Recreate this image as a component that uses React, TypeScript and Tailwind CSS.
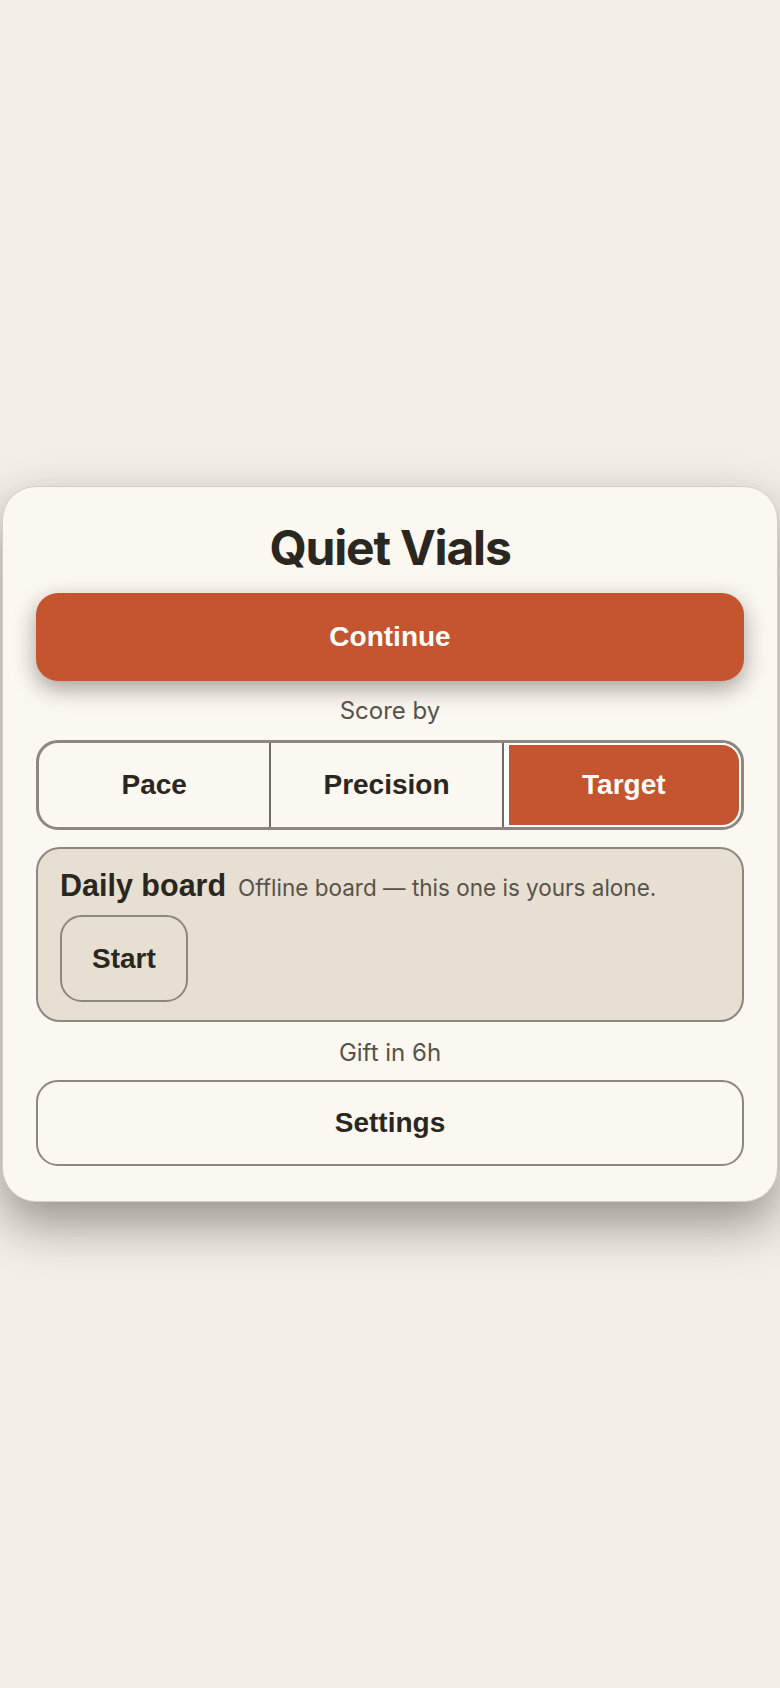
import React from "react";

const sans = "font-['Liberation_Sans',Arial,sans-serif]";
const inter = "font-['Inter','Noto_Sans',sans-serif]";

const modes = ["Pace", "Precision", "Target"];

const App = () => {
  const selected = "Target";
  return (
    <div className="min-h-screen bg-[#f3eee7] flex items-center justify-center px-[2px]">
      <div className="w-full bg-[#fbf7f1] border border-[#d3cec6] rounded-[34px] px-[33px] pt-[32px] pb-[35px] shadow-[0_22px_50px_rgba(40,34,28,0.45)] flex flex-col">
        <h1 className={`${inter} text-[48px] leading-[1.2] font-bold text-center text-[#2a2620] tracking-[-1.2px]`}>
          Quiet Vials
        </h1>
        <button
          className={`${sans} mt-[17px] h-[88px] w-full rounded-[22px] bg-[#c4552e] text-white text-[28px] font-bold shadow-[0_8px_22px_rgba(40,30,20,0.4)]`}
        >
          Continue
        </button>
        <p className={`${inter} mt-[12px] text-center text-[24px] leading-[36px] text-[#57524b]`}>Score by</p>
        <div className="mt-[11px] flex h-[90px] border-[3px] border-[#8c877f] rounded-[22px] overflow-hidden">
          {modes.map((mode, i) =>
            mode === selected ? (
              <button
                key={mode}
                className={`${sans} flex-1 bg-[#c4552e] text-white text-[28px] font-bold border-white border-t-2 border-r-2 border-b-2 border-l-[5px] rounded-r-[19px]`}
              >
                {mode}
              </button>
            ) : (
              <button
                key={mode}
                className={`${sans} flex-1 text-[#2a2620] text-[28px] font-bold ${i < modes.length - 1 ? "border-r-2 border-[#6f6a63]" : ""}`}
              >
                {mode}
              </button>
            )
          )}
        </div>
        <div className="mt-[17px] bg-[#e7dfd1] border-2 border-[#8c877f] rounded-[24px] px-[22px] pt-[19px] pb-[18px] flex flex-col items-start gap-[10px]">
          <div className="flex items-baseline gap-[12px]">
            <h2 className={`${sans} text-[30.5px] leading-[1.15] font-bold text-[#2a2620]`}>Daily board</h2>
            <span className={`${inter} text-[22.5px] text-[#57524b]`}>Offline board — this one is yours alone.</span>
          </div>
          <button
            className={`${sans} h-[87px] px-[30px] border-2 border-[#8c877f] rounded-[22px] text-[28px] font-bold text-[#2a2620]`}
          >
            Start
          </button>
        </div>
        <p className={`${inter} mt-[13px] text-center text-[24px] leading-[36px] text-[#57524b]`}>Gift in 6h</p>
        <button
          className={`${sans} mt-[9px] h-[86px] w-full border-2 border-[#8c877f] rounded-[22px] text-[28px] font-bold text-[#2a2620]`}
        >
          Settings
        </button>
      </div>
    </div>
  );
};

export default App;
